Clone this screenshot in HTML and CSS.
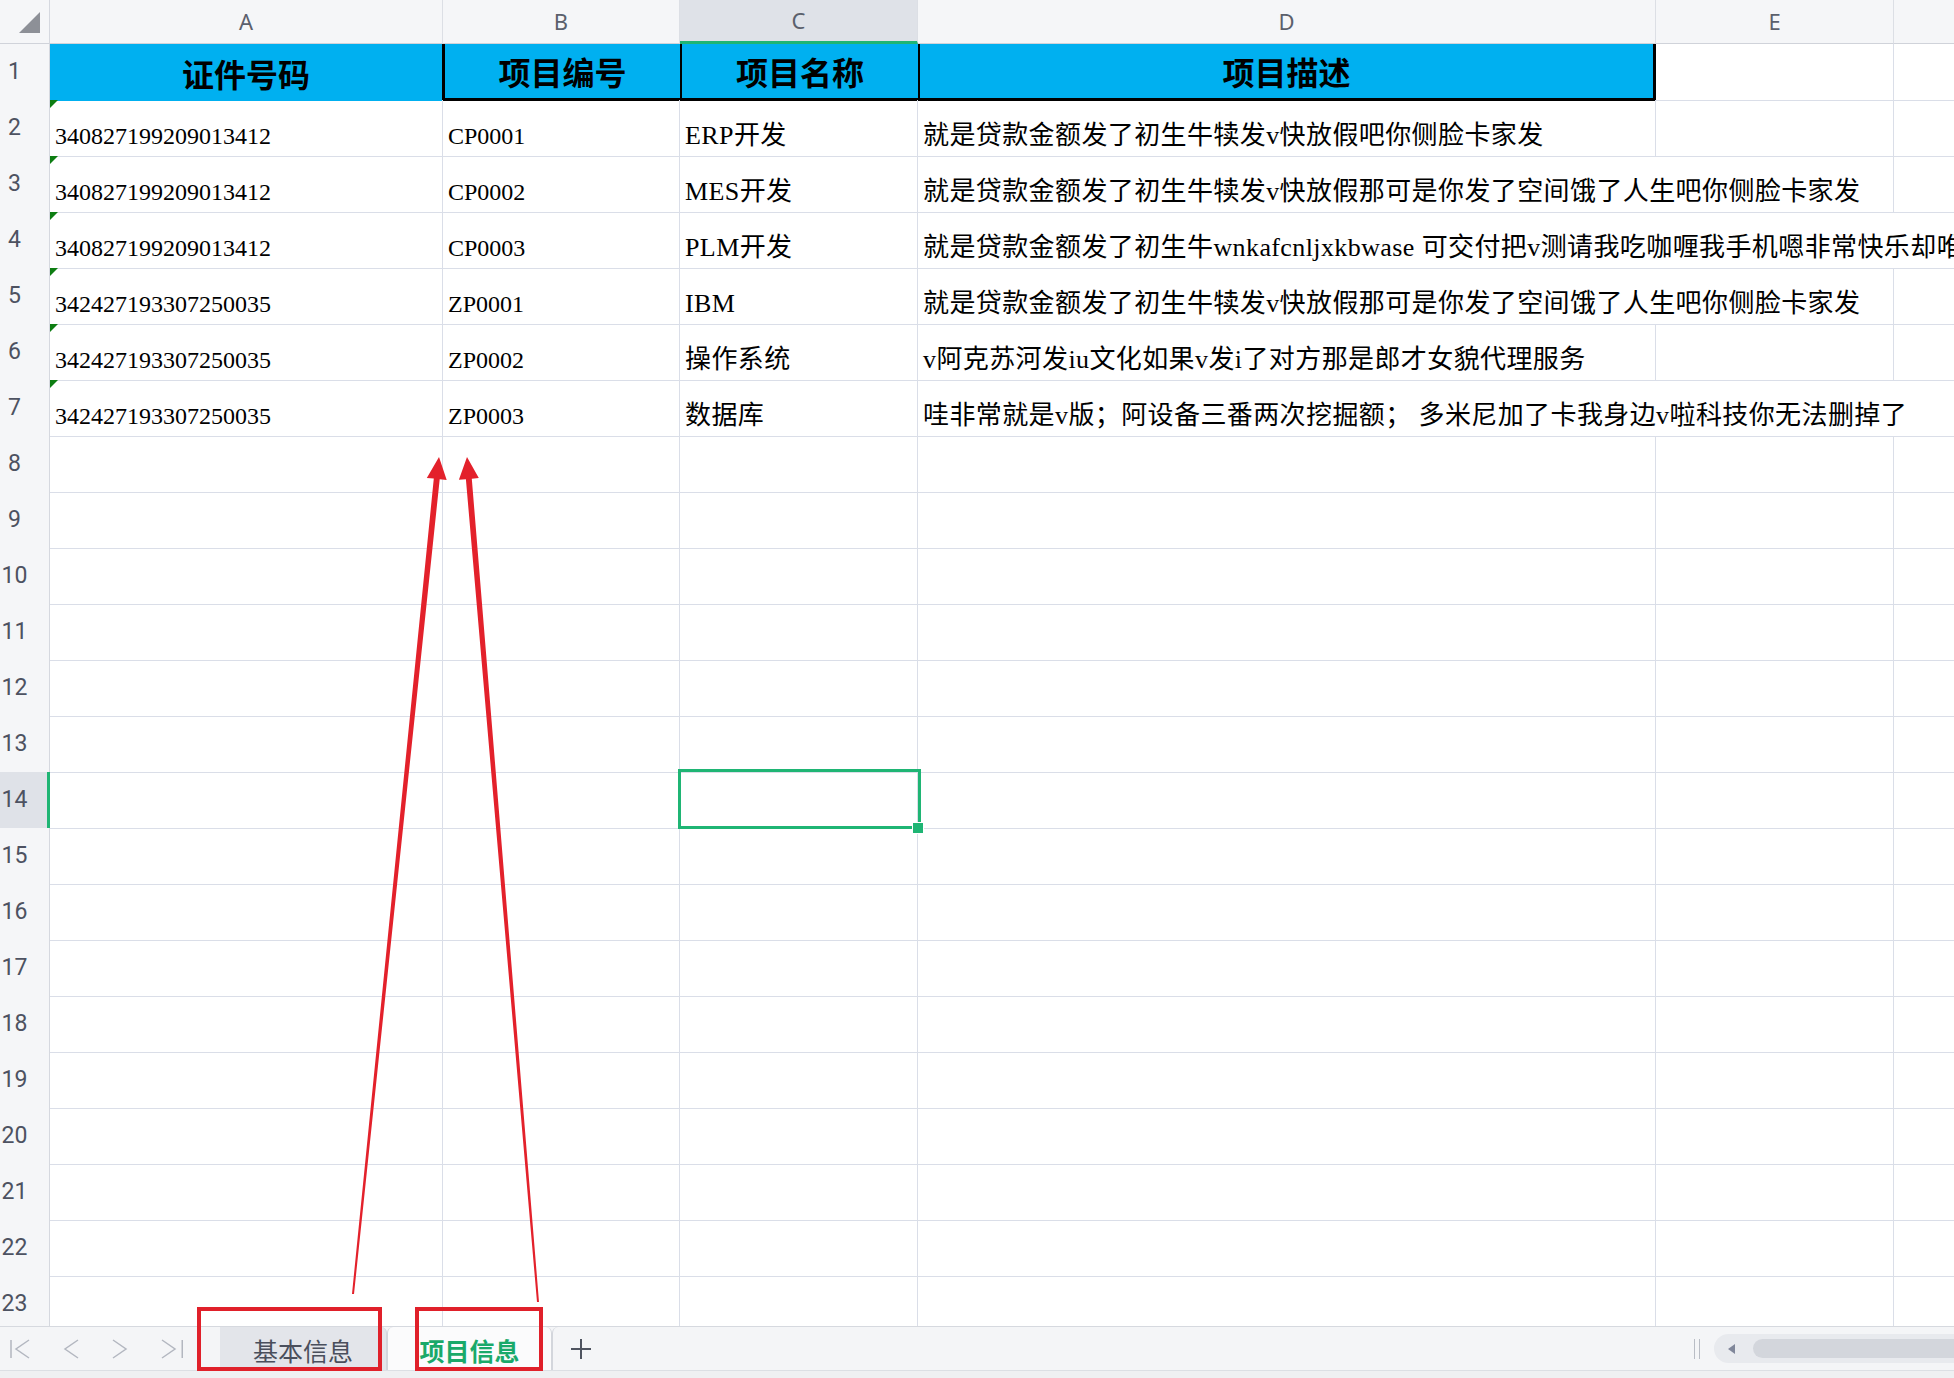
FILE: index.html
```html
<!DOCTYPE html>
<html lang="zh-CN">
<head>
<meta charset="utf-8">
<title>项目信息</title>
<link rel="stylesheet" href="styles.css">
</head>
<body>
<div class="app">
  <div class="sheet">
    <div class="row colhead">
      <div class="corner"><span class="corner-tri"></span></div>
      <div class="ch">A</div>
      <div class="ch">B</div>
      <div class="ch active">C</div>
      <div class="ch">D</div>
      <div class="ch">E</div>
      <div class="ch"></div>
    </div>
    <div class="row">
      <div class="rh">1</div>
      <div class="c t ta">证件号码</div>
      <div class="c t tb">项目编号</div>
      <div class="c t tc">项目名称</div>
      <div class="c t td">项目描述</div>
      <div class="c"></div>
      <div class="c"></div>
    </div>
    <div class="row">
      <div class="rh">2</div>
      <div class="c id">340827199209013412</div>
      <div class="c code">CP0001</div>
      <div class="c">ERP开发</div>
      <div class="c">就是贷款金额发了初生牛犊发v快放假吧你侧脸卡家发</div>
      <div class="c"></div>
      <div class="c"></div>
    </div>
    <div class="row">
      <div class="rh">3</div>
      <div class="c id">340827199209013412</div>
      <div class="c code">CP0002</div>
      <div class="c">MES开发</div>
      <div class="c s2">就是贷款金额发了初生牛犊发v快放假那可是你发了空间饿了人生吧你侧脸卡家发</div>
      <div class="c"></div>
    </div>
    <div class="row">
      <div class="rh">4</div>
      <div class="c id">340827199209013412</div>
      <div class="c code">CP0003</div>
      <div class="c">PLM开发</div>
      <div class="c s3">就是贷款金额发了初生牛wnkafcnljxkbwase 可交付把v测请我吃咖喱我手机嗯非常快乐却唯</div>
    </div>
    <div class="row">
      <div class="rh">5</div>
      <div class="c id">342427193307250035</div>
      <div class="c code">ZP0001</div>
      <div class="c">IBM</div>
      <div class="c s2">就是贷款金额发了初生牛犊发v快放假那可是你发了空间饿了人生吧你侧脸卡家发</div>
      <div class="c"></div>
    </div>
    <div class="row">
      <div class="rh">6</div>
      <div class="c id">342427193307250035</div>
      <div class="c code">ZP0002</div>
      <div class="c">操作系统</div>
      <div class="c">v阿克苏河发iu文化如果v发i了对方那是郎才女貌代理服务</div>
      <div class="c"></div>
      <div class="c"></div>
    </div>
    <div class="row">
      <div class="rh">7</div>
      <div class="c id">342427193307250035</div>
      <div class="c code">ZP0003</div>
      <div class="c">数据库</div>
      <div class="c s3">哇非常就是v版；阿设备三番两次挖掘额； 多米尼加了卡我身边v啦科技你无法删掉了</div>
    </div>
    <div class="row"><div class="rh">8</div><div class="c"></div><div class="c"></div><div class="c"></div><div class="c"></div><div class="c"></div><div class="c"></div></div>
    <div class="row"><div class="rh">9</div><div class="c"></div><div class="c"></div><div class="c"></div><div class="c"></div><div class="c"></div><div class="c"></div></div>
    <div class="row"><div class="rh">10</div><div class="c"></div><div class="c"></div><div class="c"></div><div class="c"></div><div class="c"></div><div class="c"></div></div>
    <div class="row"><div class="rh">11</div><div class="c"></div><div class="c"></div><div class="c"></div><div class="c"></div><div class="c"></div><div class="c"></div></div>
    <div class="row"><div class="rh">12</div><div class="c"></div><div class="c"></div><div class="c"></div><div class="c"></div><div class="c"></div><div class="c"></div></div>
    <div class="row"><div class="rh">13</div><div class="c"></div><div class="c"></div><div class="c"></div><div class="c"></div><div class="c"></div><div class="c"></div></div>
    <div class="row"><div class="rh active">14</div><div class="c"></div><div class="c"></div><div class="c sel-cell"><div class="sel"><span class="handle"></span></div></div><div class="c"></div><div class="c"></div><div class="c"></div></div>
    <div class="row"><div class="rh">15</div><div class="c"></div><div class="c"></div><div class="c"></div><div class="c"></div><div class="c"></div><div class="c"></div></div>
    <div class="row"><div class="rh">16</div><div class="c"></div><div class="c"></div><div class="c"></div><div class="c"></div><div class="c"></div><div class="c"></div></div>
    <div class="row"><div class="rh">17</div><div class="c"></div><div class="c"></div><div class="c"></div><div class="c"></div><div class="c"></div><div class="c"></div></div>
    <div class="row"><div class="rh">18</div><div class="c"></div><div class="c"></div><div class="c"></div><div class="c"></div><div class="c"></div><div class="c"></div></div>
    <div class="row"><div class="rh">19</div><div class="c"></div><div class="c"></div><div class="c"></div><div class="c"></div><div class="c"></div><div class="c"></div></div>
    <div class="row"><div class="rh">20</div><div class="c"></div><div class="c"></div><div class="c"></div><div class="c"></div><div class="c"></div><div class="c"></div></div>
    <div class="row"><div class="rh">21</div><div class="c"></div><div class="c"></div><div class="c"></div><div class="c"></div><div class="c"></div><div class="c"></div></div>
    <div class="row"><div class="rh">22</div><div class="c"></div><div class="c"></div><div class="c"></div><div class="c"></div><div class="c"></div><div class="c"></div></div>
    <div class="row"><div class="rh">23</div><div class="c"></div><div class="c"></div><div class="c"></div><div class="c"></div><div class="c"></div><div class="c"></div></div>
  </div>

  <div class="tabbar">
    <div class="nav">
      <svg viewBox="0 0 22 20"><path d="M3 1V19M21 1L8 10L21 19"/></svg>
      <svg viewBox="0 0 22 20"><path d="M19 1L6 10L19 19"/></svg>
      <svg viewBox="0 0 22 20"><path d="M3 1L16 10L3 19"/></svg>
      <svg viewBox="0 0 22 20"><path d="M1 1L14 10L1 19M21.25 1V19"/></svg>
    </div>
    <div class="tab tab-base">基本信息</div>
    <div class="tab tab-active">项目信息</div>
    <div class="add"><svg viewBox="0 0 22 22"><path d="M11 1V21M1 11H21"/></svg></div>
    <div class="hs">
      <span class="grip"></span>
      <div class="track"><span class="tri"></span><span class="thumb"></span></div>
    </div>
  </div>
  <div class="statusbar"></div>
</div>

<svg class="annot" viewBox="0 0 1954 1378" width="1954" height="1378">
  <rect x="199" y="1309" width="181" height="60" />
  <rect x="417" y="1309" width="124" height="60" />
  <polygon class="arrow" points="439,457 446.7,479.9 439.7,479.2 354,1294.1 352,1293.9 433.8,478.6 426.8,477.9"/>
  <polygon class="arrow" points="467,457 478.8,478.1 471.8,478.7 539,1301.9 537,1302.1 465.9,479.2 458.9,479.8"/>
</svg>
</body>
</html>
```

FILE: styles.css
```css
* { box-sizing: border-box; }
html, body { margin: 0; padding: 0; }
body {
  width: 1954px;
  height: 1378px;
  overflow: hidden;
  background: #fff;
  position: relative;
  font-family: "Liberation Serif", "Noto Sans CJK SC", serif;
}
.app { display: flex; flex-direction: column; height: 1378px; }

.sheet { height: 1326px; flex: none; overflow: hidden; width: 1954px; }
.row {
  display: grid;
  grid-template-columns: 50px 393px 237px 238px 738px 238px 238px;
  height: 56px;
}
.colhead { height: 44px; }

/* column headers */
.corner {
  background: #f5f6f8;
  border-right: 1px solid #d5d8df;
  border-bottom: 1px solid #d0d3da;
  display: flex;
  justify-content: flex-end;
  align-items: flex-end;
  padding: 0 9px 10px 0;
}
.corner-tri {
  width: 0; height: 0;
  border-left: 21px solid transparent;
  border-bottom: 21px solid #8d9097;
}
.ch {
  background: #f5f6f8;
  border-right: 1px solid #dcdfe5;
  border-bottom: 1px solid #d0d3da;
  text-align: center;
  font-family: "Noto Sans", Roboto, sans-serif;
  font-size: 22px;
  color: #5b606c;
  line-height: 43px;
}
.ch.active {
  background: #dfe2e8;
  border-bottom: 3px solid #1fb574;
  line-height: 41px;
}

/* row headers */
.rh {
  background: #f5f6f8;
  border-right: 1px solid #d5d8df;
  border-bottom: 1px solid #e4e6eb;
  font-family: Roboto, "Noto Sans", sans-serif;
  font-size: 23px;
  color: #4d5261;
  text-align: center;
  padding-right: 20px;
  line-height: 56px;
}
.rh.active {
  background: #dfe2e8;
  border-right: 3px solid #1fb574;
  padding-right: 18px;
}

/* cells */
.c {
  border-right: 1px solid #dadee8;
  border-bottom: 1px solid #dadee8;
  padding: 21px 0 0 5px;
  font-size: 26px;
  line-height: 30px;
  letter-spacing: 0.4px;
  white-space: nowrap;
  overflow: hidden;
  color: #000;
  min-width: 0;
}
.s2 { grid-column: span 2; }
.s3 { grid-column: span 3; }
.code { font-size: 24px; letter-spacing: 0; }
.id { font-size: 24px; letter-spacing: 0; position: relative; }
.id::before {
  content: "";
  position: absolute;
  left: 0; top: 0;
  border-top: 8px solid #0d7d12;
  border-right: 8px solid transparent;
}

/* title row */
.t {
  background: #00b0f0;
  font-family: "Noto Sans CJK SC", sans-serif;
  font-weight: 700;
  font-size: 32px;
  line-height: 1;
  letter-spacing: 0;
  color: #000;
  display: flex;
  align-items: center;
  justify-content: center;
  padding: 0;
}
.ta { border-right: 1px solid #000; border-bottom: none; }
.tb { border-left: 2px solid #000; border-right: none; border-bottom: 3px solid #000; }
.tc { border-left: 2px solid #000; border-right: none; border-bottom: 3px solid #000; }
.td { border-left: 2px solid #000; border-right: 3px solid #000; border-bottom: 3px solid #000; }

/* selection */
.sel-cell { position: relative; overflow: visible; }
.sel {
  position: absolute;
  left: -2px; top: -3px; right: -4px; bottom: -1px;
  border: 3px solid #1fb574;
  z-index: 2;
}
.handle {
  position: absolute;
  right: -6px; bottom: -8px;
  width: 12px; height: 12px;
  background: #1fb574;
  border: 1px solid #fff;
}

/* sheet tab bar */
.tabbar {
  height: 44px;
  flex: none;
  background: #f4f5f7;
  border-top: 1px solid #d6d9df;
  display: flex;
  align-items: stretch;
}
.nav {
  flex: none;
  width: 200px;
  display: flex;
  align-items: center;
  gap: 29px;
  padding-left: 8px;
}
.nav svg { width: 22px; height: 20px; display: block; flex: none; }
.nav path { fill: none; stroke: #b3b7c0; stroke-width: 1.5; }

.tab {
  flex: none;
  display: flex;
  align-items: center;
  justify-content: center;
  font-family: "Noto Sans CJK SC", sans-serif;
  font-size: 25px;
  padding-top: 2px;
}
.tab-base {
  margin-left: 20px;
  width: 167px;
  background: #e3e5ea;
  color: #4a4f5c;
  border-right: 1px solid #d3d6dc;
  border-top-right-radius: 6px;
}
.tab-active {
  width: 165px;
  background: #fbfbfc;
  color: #1aa96a;
  font-weight: 700;
  border-left: 1px solid #d3d6dc;
  border-right: 1px solid #d3d6dc;
  border-radius: 6px 6px 0 0;
}
.add {
  flex: none;
  width: 56px;
  display: flex;
  align-items: center;
  justify-content: center;
  border-left: 1px solid #d3d6dc;
  border-top-left-radius: 6px;
}
.add svg { width: 22px; height: 22px; display: block; }
.add path { fill: none; stroke: #4f5460; stroke-width: 2; }

.hs {
  margin-left: auto;
  flex: none;
  width: 264px;
  display: flex;
  align-items: center;
}
.grip {
  flex: none;
  margin-left: 4px;
  width: 6px;
  height: 20px;
  border-left: 1px solid #b9bdc5;
  border-right: 1px solid #b9bdc5;
}
.track {
  flex: 1;
  margin-left: 14px;
  height: 29px;
  background: #e8eaee;
  border-radius: 15px 0 0 15px;
  display: flex;
  align-items: center;
  padding-left: 14px;
}
.tri {
  flex: none;
  width: 0; height: 0;
  border-right: 7px solid #80879a;
  border-top: 5px solid transparent;
  border-bottom: 5px solid transparent;
}
.thumb {
  flex: 1;
  margin-left: 18px;
  height: 19px;
  background: #d3d6dc;
  border-radius: 10px 0 0 10px;
}
.statusbar {
  flex: none;
  height: 8px;
  background: #eff0f2;
  border-top: 1px solid #dcdfe4;
}

/* annotation overlay */
.annot {
  position: absolute;
  left: 0; top: 0;
  width: 1954px; height: 1378px;
  pointer-events: none;
  z-index: 5;
}
.annot rect { fill: none; stroke: #e0202a; stroke-width: 4; }
.annot .arrow { fill: #e3212b; stroke: none; }
```
